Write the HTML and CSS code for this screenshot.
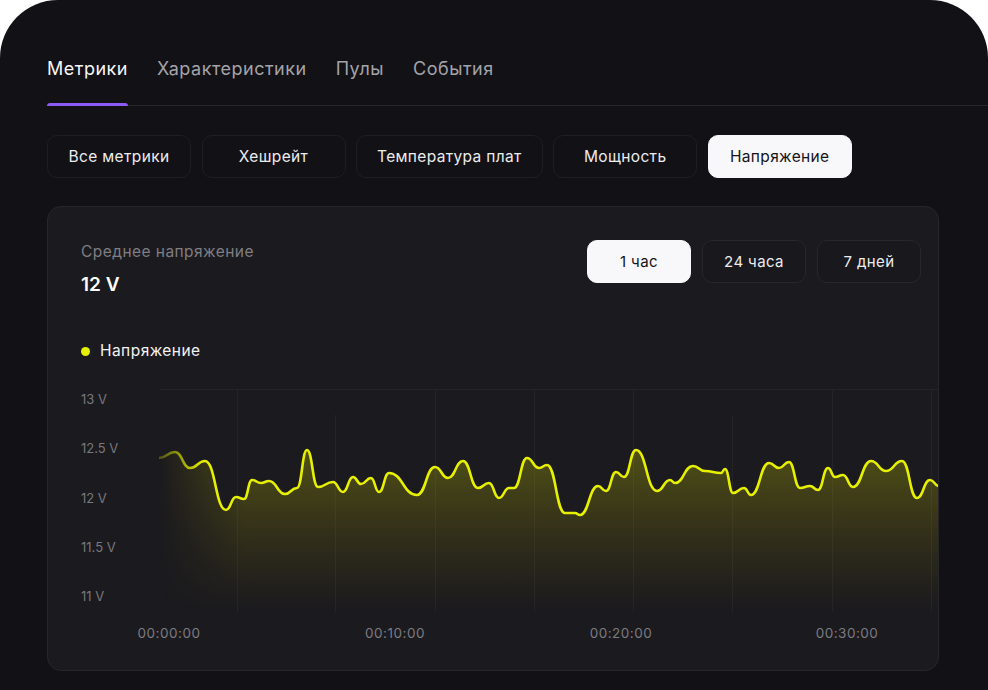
FILE: index.html
```html
<!DOCTYPE html>
<html lang="ru">
<head>
<meta charset="utf-8">
<title>Метрики</title>
<link rel="stylesheet" href="styles.css">
</head>
<body>
<div class="panel">
  <nav class="tabs">
    <div class="tab active">Метрики</div>
    <div class="tab">Характеристики</div>
    <div class="tab">Пулы</div>
    <div class="tab">События</div>
  </nav>

  <div class="filters">
    <div class="chip">Все метрики</div>
    <div class="chip">Хешрейт</div>
    <div class="chip">Температура плат</div>
    <div class="chip">Мощность</div>
    <div class="chip chip-active">Напряжение</div>
  </div>

  <section class="card">
    <div class="card-head">
      <div class="summary">
        <div class="summary-title">Среднее напряжение</div>
        <div class="summary-value">12 V</div>
      </div>
      <div class="ranges">
        <div class="range range-active">1 час</div>
        <div class="range">24 часа</div>
        <div class="range">7 дней</div>
      </div>
    </div>

    <div class="legend"><span class="legend-dot"></span>Напряжение</div>

    <div class="chart">
      <div class="y-axis">
        <span>13 V</span>
        <span>12.5 V</span>
        <span>12 V</span>
        <span>11.5 V</span>
        <span>11 V</span>
      </div>
      <svg class="plot" viewBox="160 389 779 223" preserveAspectRatio="none">
        <defs>
          <linearGradient id="fillGrad" gradientUnits="userSpaceOnUse" x1="0" y1="450" x2="0" y2="612">
            <stop offset="0" stop-color="#e0e400" stop-opacity="0.27"/>
            <stop offset="0.55" stop-color="#d4c400" stop-opacity="0.12"/>
            <stop offset="1" stop-color="#c8a800" stop-opacity="0.0"/>
          </linearGradient>
          <linearGradient id="fadeFill" gradientUnits="userSpaceOnUse" x1="160" y1="0" x2="245" y2="0">
            <stop offset="0" stop-color="#000"/>
            <stop offset="1" stop-color="#fff"/>
          </linearGradient>
          <linearGradient id="fadeLine" gradientUnits="userSpaceOnUse" x1="160" y1="0" x2="205" y2="0">
            <stop offset="0" stop-color="#444"/>
            <stop offset="1" stop-color="#fff"/>
          </linearGradient>
          <mask id="maskFill" maskUnits="userSpaceOnUse" x="160" y="389" width="780" height="223">
            <rect x="160" y="389" width="780" height="223" fill="url(#fadeFill)"/>
          </mask>
          <mask id="maskLine" maskUnits="userSpaceOnUse" x="150" y="389" width="800" height="223">
            <rect x="150" y="389" width="800" height="223" fill="url(#fadeLine)"/>
          </mask>
        </defs>
        <g class="grid">
          <line x1="160" y1="389.5" x2="940" y2="389.5"/>
          <line x1="238.5" y1="390" x2="238.5" y2="612"/>
          <line x1="336.5" y1="415" x2="336.5" y2="612"/>
          <line x1="436.5" y1="390" x2="436.5" y2="612"/>
          <line x1="535.5" y1="390" x2="535.5" y2="612"/>
          <line x1="634.5" y1="390" x2="634.5" y2="612"/>
          <line x1="733.5" y1="415" x2="733.5" y2="612"/>
          <line x1="833.5" y1="390" x2="833.5" y2="612"/>
          <line x1="932.5" y1="390" x2="932.5" y2="612"/>
        </g>
        <path class="area" mask="url(#maskFill)" fill="url(#fillGrad)" d="M160,458 C168,458 168,452 176,452 C183.5,452 183.5,468 191,468 C198.5,468 198.5,461 206,461 C216.5,461 216.5,510 227,510 C232,510 232,497 237,497 C241,497 241,499 245,499 C249,499 249,480 253,480 C257.5,480 257.5,483 262,483 C266,483 266,481 270,481 C278,481 278,494 286,494 C292,494 292,488 298,488 C303,488 303,450 308,450 C313.5,450 313.5,487 319,487 C326.5,487 326.5,482 334,482 C339,482 339,492 344,492 C349,492 349,477 354,477 C358,477 358,484 362,484 C367,484 367,478 372,478 C376,478 376,492 380,492 C385,492 385,473 390,473 C404,473 404,495 418,495 C427,495 427,467 436,467 C442.5,467 442.5,478 449,478 C456.5,478 456.5,461 464,461 C471.5,461 471.5,488 479,488 C484.5,488 484.5,483 490,483 C495,483 495,498 500,498 C505,498 505,488 510,488 C512.5,488 512.5,488 515,488 C521.5,488 521.5,458 528,458 C534,458 534,468 540,468 C544,468 544,465 548,465 C557,465 557,513 566,513 C571,513 571,513 576,513 C578.5,513 578.5,515 581,515 C590,515 590,486 599,486 C603,486 603,491 607,491 C612,491 612,472 617,472 C621,472 621,477 625,477 C631,477 631,450 637,450 C647.5,450 647.5,491 658,491 C664.5,491 664.5,480 671,480 C673.5,480 673.5,483 676,483 C685,483 685,466 694,466 C700,466 700,471 706,471 C714,471 714,473 722,473 C724,473 724,469 726,469 C730,469 730,493 734,493 C739.5,493 739.5,488 745,488 C748.5,488 748.5,495 752,495 C761,495 761,463 770,463 C775,463 775,468 780,468 C785,468 785,462 790,462 C795.5,462 795.5,488 801,488 C806,488 806,486 811,486 C815,486 815,490 819,490 C824,490 824,468 829,468 C832.5,468 832.5,477 836,477 C840,477 840,475 844,475 C849,475 849,487 854,487 C863,487 863,461 872,461 C879.5,461 879.5,471 887,471 C895,471 895,461 903,461 C910.5,461 910.5,498 918,498 C924.5,498 924.5,480 931,480 C935.5,480 935.5,486 940,486 L940,612 L160,612 Z"/>
        <path class="line" mask="url(#maskLine)" d="M160,458 C168,458 168,452 176,452 C183.5,452 183.5,468 191,468 C198.5,468 198.5,461 206,461 C216.5,461 216.5,510 227,510 C232,510 232,497 237,497 C241,497 241,499 245,499 C249,499 249,480 253,480 C257.5,480 257.5,483 262,483 C266,483 266,481 270,481 C278,481 278,494 286,494 C292,494 292,488 298,488 C303,488 303,450 308,450 C313.5,450 313.5,487 319,487 C326.5,487 326.5,482 334,482 C339,482 339,492 344,492 C349,492 349,477 354,477 C358,477 358,484 362,484 C367,484 367,478 372,478 C376,478 376,492 380,492 C385,492 385,473 390,473 C404,473 404,495 418,495 C427,495 427,467 436,467 C442.5,467 442.5,478 449,478 C456.5,478 456.5,461 464,461 C471.5,461 471.5,488 479,488 C484.5,488 484.5,483 490,483 C495,483 495,498 500,498 C505,498 505,488 510,488 C512.5,488 512.5,488 515,488 C521.5,488 521.5,458 528,458 C534,458 534,468 540,468 C544,468 544,465 548,465 C557,465 557,513 566,513 C571,513 571,513 576,513 C578.5,513 578.5,515 581,515 C590,515 590,486 599,486 C603,486 603,491 607,491 C612,491 612,472 617,472 C621,472 621,477 625,477 C631,477 631,450 637,450 C647.5,450 647.5,491 658,491 C664.5,491 664.5,480 671,480 C673.5,480 673.5,483 676,483 C685,483 685,466 694,466 C700,466 700,471 706,471 C714,471 714,473 722,473 C724,473 724,469 726,469 C730,469 730,493 734,493 C739.5,493 739.5,488 745,488 C748.5,488 748.5,495 752,495 C761,495 761,463 770,463 C775,463 775,468 780,468 C785,468 785,462 790,462 C795.5,462 795.5,488 801,488 C806,488 806,486 811,486 C815,486 815,490 819,490 C824,490 824,468 829,468 C832.5,468 832.5,477 836,477 C840,477 840,475 844,475 C849,475 849,487 854,487 C863,487 863,461 872,461 C879.5,461 879.5,471 887,471 C895,471 895,461 903,461 C910.5,461 910.5,498 918,498 C924.5,498 924.5,480 931,480 C935.5,480 935.5,486 940,486"/>
      </svg>
    </div>

    <div class="x-axis">
      <span>00:00:00</span>
      <span>00:10:00</span>
      <span>00:20:00</span>
      <span>00:30:00</span>
    </div>
  </section>
</div>
</body>
</html>
```

FILE: styles.css
```css
* {
  box-sizing: border-box;
}

html, body {
  margin: 0;
  padding: 0;
  background: #ffffff;
}

body {
  font-family: Inter, "Noto Sans", "DejaVu Sans", sans-serif;
  color: #f3f3f5;
  overflow: hidden;
}

.panel {
  width: 988px;
  min-height: 740px;
  background: #121115;
  border-radius: 58px 58px 0 0;
  padding: 56px 0 0 47px;
}

/* Tabs */
.tabs {
  display: flex;
  gap: 29px;
  border-bottom: 1px solid #27262b;
}

.tab {
  position: relative;
  font-size: 18px;
  letter-spacing: 0.5px;
  line-height: 26px;
  padding-bottom: 23px;
  color: #a4a3a9;
}

.tab.active {
  color: #f6f6f8;
}

.tab.active::after {
  content: "";
  position: absolute;
  left: 0;
  right: 0;
  bottom: -1px;
  height: 3px;
  border-radius: 3px 3px 0 0;
  background: #8a5cf5;
}

/* Filter chips */
.filters {
  display: flex;
  gap: 10.5px;
  margin-top: 29px;
}

.chip {
  min-width: 144px;
  height: 43px;
  padding: 0 20px;
  display: flex;
  align-items: center;
  justify-content: center;
  border: 1px solid #1f1e23;
  border-radius: 10px;
  background: #121115;
  font-size: 15.5px;
  letter-spacing: 0.35px;
  color: #ececee;
}

.chip-active {
  background: #f8f7fa;
  border-color: #f8f7fa;
  color: #151418;
}

/* Card */
.card {
  width: 892px;
  margin-top: 28px;
  background: #1b1a1e;
  border: 1px solid #27262b;
  border-radius: 14px;
  padding: 33px 0 29px 33px;
  overflow: hidden;
}

.card-head {
  display: flex;
  justify-content: space-between;
  align-items: flex-start;
  margin-right: 17px;
}

.summary-title {
  margin-top: 2px;
  font-size: 15.5px;
  letter-spacing: 0.45px;
  line-height: 20px;
  color: #7f7e84;
}

.summary-value {
  margin-top: 11px;
  font-size: 19px;
  line-height: 24px;
  font-weight: 600;
  color: #ffffff;
}

.ranges {
  display: flex;
  gap: 11px;
}

.range {
  width: 104px;
  height: 43px;
  display: flex;
  align-items: center;
  justify-content: center;
  border: 1px solid #28272c;
  border-radius: 10px;
  background: #19181c;
  font-size: 15px;
  letter-spacing: 0.4px;
  color: #ececee;
}

.range-active {
  background: #f8f7fa;
  border-color: #f8f7fa;
  color: #151418;
}

.legend {
  margin-top: 44px;
  display: flex;
  align-items: center;
  gap: 10px;
  font-size: 15.5px;
  letter-spacing: 0.45px;
  line-height: 20px;
  color: #f3f3f5;
}

.legend-dot {
  width: 9px;
  height: 9px;
  border-radius: 50%;
  background: #e6f000;
}

/* Chart */
.chart {
  margin-top: 28px;
  display: flex;
  height: 223px;
}

.y-axis {
  width: 78px;
  flex: none;
  display: flex;
  flex-direction: column;
  gap: 33.25px;
  padding-top: 2px;
  font-size: 13px;
  line-height: 16px;
  color: #78777d;
}

.plot {
  display: block;
  width: 779px;
  height: 223px;
  flex: none;
}

.grid line {
  stroke: #ffffff;
  stroke-opacity: 0.045;
  stroke-width: 1;
}

.line {
  fill: none;
  stroke: #e6f000;
  stroke-width: 2.6;
  stroke-linejoin: round;
  stroke-linecap: round;
}

.x-axis {
  margin-top: 13px;
  padding-left: 55px;
  display: flex;
  gap: 160px;
  font-size: 13.5px;
  letter-spacing: 0.5px;
  line-height: 16px;
  color: #7c7b81;
}

.x-axis span {
  width: 66px;
  text-align: center;
  white-space: nowrap;
}
```
